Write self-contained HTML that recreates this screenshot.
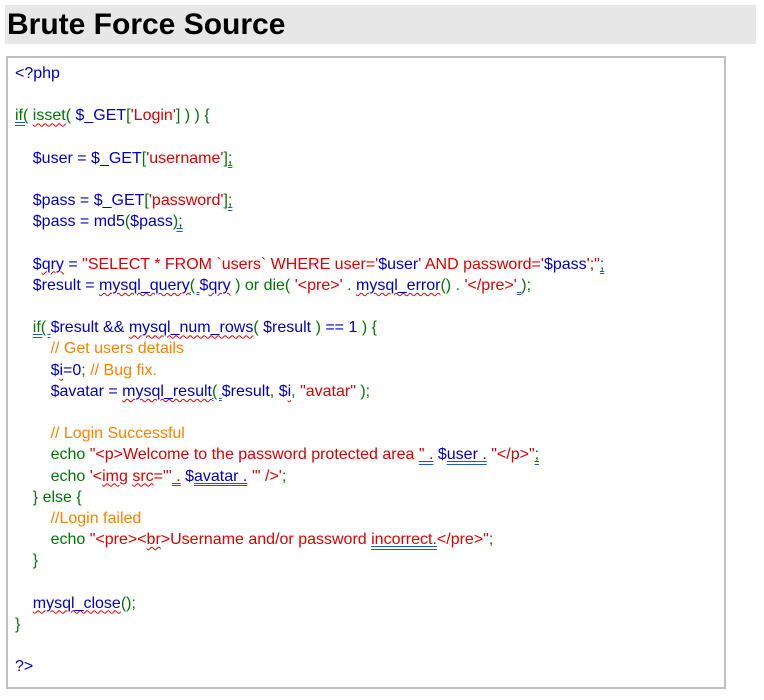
<!DOCTYPE html>
<html><head><meta charset="utf-8"><style>
body{margin:0;background:#fff;font-family:"Liberation Sans",Arial,sans-serif;}
.h{position:absolute;left:5px;top:5px;width:751px;height:39px;background:#e7e7e7;}
.h span{position:absolute;left:2px;top:3px;font-size:30px;font-weight:bold;color:#000;line-height:34px;}
.box{position:absolute;left:6px;top:56px;width:716px;height:629px;border:2px solid #c0c0c0;}
pre{margin:0;position:absolute;left:7px;top:5px;font-family:"Liberation Sans",Arial,sans-serif;font-size:16px;line-height:21.18px;color:#0000bb;white-space:pre;}
.g{color:#007700}.r{color:#dd0000}.o{color:#ff8000}.b{color:#0000bb}
.w{text-decoration:underline wavy #e00;text-decoration-thickness:1px;text-underline-offset:2px}
.u{text-decoration:underline double #2255cc;text-underline-offset:2px}
</style></head><body>
<div class="h"><span>Brute Force Source</span></div>
<div class="box"><pre>&lt;?php

<span class="g"><span class="u">if(</span> <span class="w">isset</span>( </span>$_GET<span class="g">[</span><span class="r">'Login'</span><span class="g">] ) ) {</span>

    $user = $_GET<span class="g">[</span><span class="r">'username'</span><span class="g">]<span class="u">;</span></span>

    $pass = $_GET<span class="g">[</span><span class="r">'password'</span><span class="g">]<span class="u">;</span></span>
    $pass = md5<span class="g">(</span>$pass<span class="g"><span class="u">);</span></span>

    $<span class="w">qry</span> = <span class="r">"SELECT * FROM `users` WHERE user='</span>$user<span class="r">' AND password='</span>$pass<span class="r">';"</span><span class="g u">;</span>
    $result = <span class="w">mysql_query</span><span class="g u">( </span>$<span class="w">qry</span> <span class="g">) or die( </span><span class="r">'&lt;pre&gt;'</span> <span class="g">.</span> <span class="w">mysql_error</span><span class="g">() . </span><span class="r">'&lt;/pre&gt;'</span><span class="g"><span class="u"> </span>);</span>

    <span class="g"><span class="u">if( </span></span>$result &amp;&amp; <span class="w">mysql_num_rows</span><span class="g">( </span>$result <span class="g">)</span> == 1 <span class="g">) {</span>
        <span class="o">// Get users details</span>
        $<span class="w">i</span>=0<span class="g">;</span> <span class="o">// Bug fix.</span>
        $avatar = <span class="w">mysql_result</span><span class="g u">( </span>$result<span class="g">,</span> $<span class="w">i</span><span class="g">,</span> <span class="r">"avatar"</span> <span class="g">);</span>

        <span class="o">// Login Successful</span>
        <span class="g">echo </span><span class="r">"&lt;p&gt;Welcome to the password protected area <span class="u">" .</span> </span>$<span class="u">user .</span> <span class="r">"&lt;/p&gt;"</span><span class="g u">;</span>
        <span class="g">echo </span><span class="r">'&lt;<span class="w">img</span> <span class="w">src</span>="'<span class="u"> .</span> </span>$<span class="u">avatar .</span> <span class="r">'" /&gt;'</span><span class="g">;</span>
    <span class="g">} else {</span>
        <span class="o">//Login failed</span>
        <span class="g">echo </span><span class="r">"&lt;pre&gt;&lt;<span class="w">br</span>&gt;Username and/or password <span class="u">incorrect.</span>&lt;/pre&gt;"</span><span class="g">;</span>
    <span class="g">}</span>

    <span class="w">mysql_close</span><span class="g">();</span>
<span class="g">}</span>

?&gt;</pre></div>
</body></html>
